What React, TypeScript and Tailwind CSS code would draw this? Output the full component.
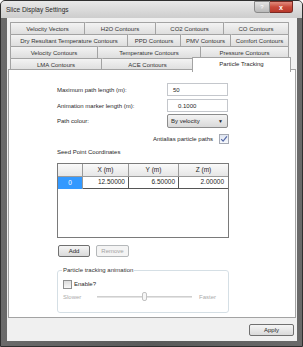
import React from "react";

type Tab = { label: string; w: number; selected?: boolean };

const rows: Tab[][] = [
  [
    { label: "Velocity Vectors", w: 75 },
    { label: "H2O Contours", w: 71 },
    { label: "CO2 Contours", w: 68 },
    { label: "CO  Contours", w: 65 },
  ],
  [
    { label: "Dry Resultant Temperature Contours", w: 118 },
    { label: "PPD Contours", w: 53 },
    { label: "PMV Contours", w: 50 },
    { label: "Comfort Contours", w: 58 },
  ],
  [
    { label: "Velocity Contours", w: 88 },
    { label: "Temperature Contours", w: 103 },
    { label: "Pressure Contours", w: 88 },
  ],
  [
    { label: "LMA Contours", w: 92 },
    { label: "ACE Contours", w: 92 },
    { label: "Particle Tracking", w: 95, selected: true },
  ],
];

function Check() {
  return (
    <svg width="8" height="8" viewBox="0 0 8 8">
      <path d="M1.2 4.2 L3.1 6.2 L6.9 1.4" fill="none" stroke="#5468a6" strokeWidth="1.2" />
    </svg>
  );
}

export default function App() {
  return (
    <div className="w-[303px] h-[347px] flex flex-col bg-[#5d5d5d] border border-[#2f2f2f] rounded-t-[5px] overflow-hidden font-['Liberation_Sans',Arial,sans-serif] text-[6px] leading-none text-[#1f1f1f]">
      {/* Title bar */}
      <div className="h-[17px] shrink-0 flex items-start justify-between pl-[5px] pr-[9px] bg-gradient-to-b from-[#e9e9e9] to-[#cdcdcd]">
        <span className="mt-[6px] text-[6.5px] text-[#2a2a2a]">Slice Display Settings</span>
        <div className="flex">
          <div className="w-[16px] h-[12px] flex items-center justify-center border border-[#8a8a8a] rounded-bl-[3px] bg-gradient-to-b from-[#e2e2e2] to-[#b9b9b9] text-[6px] text-white">
            ?
          </div>
          <div className="w-[23px] h-[12px] flex items-center justify-center border border-l-0 border-[#7a2a23] rounded-br-[3px] bg-gradient-to-b from-[#e08a7d] via-[#c94a3b] to-[#b9392b] text-[7px] font-bold text-white">
            x
          </div>
        </div>
      </div>

      {/* Frame + client */}
      <div className="flex-1 flex pl-[6px] pr-[5px] pb-[5px] bg-gradient-to-r from-[#6a6a6a] via-[#5a5a5a] to-[#6a6a6a]">
        <div className="flex-1 flex flex-col bg-[#f0f0f0] pt-[4px]">
          {/* Tab rows */}
          <div className="flex flex-col pl-[3px]">
            {rows.map((row, ri) => (
              <div key={ri} className="flex h-[12px] items-end">
                {row.map((t) =>
                  t.selected ? (
                    <div
                      key={t.label}
                      style={{ width: t.w + 4 }}
                      className="relative z-10 -mx-[2px] h-[15px] -mb-[2px] flex items-start justify-center pt-[3px] bg-white border border-b-0 border-[#a3a3a3] rounded-t-[1px]"
                    >
                      {t.label}
                    </div>
                  ) : (
                    <div
                      key={t.label}
                      style={{ width: t.w }}
                      className="h-[12px] flex items-center justify-center bg-gradient-to-b from-[#f3f3f3] to-[#dedede] border border-l-0 first:border-l border-b-0 border-[#a3a3a3] rounded-t-[1px] text-[#333]"
                    >
                      {t.label}
                    </div>
                  )
                )}
              </div>
            ))}
          </div>

          {/* Panel */}
          <div className="mx-[1px] -mt-[1px] h-[249px] bg-white border border-[#a3a3a3] pl-[48px] pt-[13px] flex flex-col">
            <div className="flex items-center h-[13px]">
              <span className="w-[110px]">Maximum path length (m):</span>
              <div className="w-[61px] h-[13px] border border-[#c4c7cc] flex items-center pl-[5px]">50</div>
            </div>
            <div className="flex items-center h-[13px] mt-[3px]">
              <span className="w-[110px]">Animation marker length (m):</span>
              <div className="w-[61px] h-[13px] border border-[#c4c7cc] flex items-center pl-[10px]">0.1000</div>
            </div>
            <div className="flex items-center h-[14px] mt-[2px]">
              <span className="w-[110px]">Path colour:</span>
              <div className="w-[61px] h-[14px] border border-[#8c8c8c] rounded-[2px] bg-gradient-to-b from-[#f4f4f4] to-[#d9d9d9] flex items-center justify-between pl-[3px] pr-[4px]">
                <span>By velocity</span>
                <span className="text-[5px]">▼</span>
              </div>
            </div>
            <div className="flex items-center justify-end w-[172px] h-[10px] mt-[6px]">
              <span className="mr-[6px]">Antialias particle paths</span>
              <div className="w-[10px] h-[10px] border border-[#a5a9b3] bg-gradient-to-b from-[#dfe5f0] to-[#f7f9fc] flex items-center justify-center">
                <Check />
              </div>
            </div>

            <div className="mt-[5px] h-[8px]">Seed Point Coordinates</div>

            {/* Table */}
            <div className="mt-[6px] w-[172px] h-[75px] border border-[#7a7a7a] bg-white flex flex-col">
              <div className="flex h-[13px] bg-gradient-to-b from-[#fafafa] to-[#e6e6e6] border-b border-[#9a9a9a]">
                <div className="w-[25px] border-r border-[#9a9a9a]" />
                <div className="w-[46px] border-r border-[#9a9a9a] flex items-center justify-center text-[6.5px]">X (m)</div>
                <div className="w-[50px] border-r border-[#9a9a9a] flex items-center justify-center text-[6.5px]">Y (m)</div>
                <div className="flex-1 flex items-center justify-center text-[6.5px]">Z (m)</div>
              </div>
              <div className="flex h-[12px]">
                <div className="w-[25px] bg-[#3399ff] text-white flex items-center justify-center text-[6.5px] border-r border-[#9a9a9a]">0</div>
                <div className="w-[46px] border-r border-b border-[#555] flex items-center justify-end pr-[3px] text-[6.5px]">12.50000</div>
                <div className="w-[50px] border-r border-b border-[#555] flex items-center justify-end pr-[3px] text-[6.5px]">6.50000</div>
                <div className="flex-1 border-b border-[#555] flex items-center justify-end pr-[4px] text-[6.5px]">2.00000</div>
              </div>
            </div>

            {/* Buttons */}
            <div className="flex gap-[6px] mt-[7px] ml-[1px]">
              <div className="w-[32px] h-[12px] border border-[#707070] rounded-[2px] bg-gradient-to-b from-[#f5f5f5] to-[#dadada] flex items-center justify-center">
                Add
              </div>
              <div className="w-[33px] h-[12px] border border-[#b5b8ba] rounded-[2px] bg-[#f4f4f4] flex items-center justify-center text-[#a3a3a3]">
                Remove
              </div>
            </div>

            {/* Group box */}
            <fieldset className="mt-[10px] w-[172px] h-[46px] border border-[#d5dfe5] rounded-[3px] px-[5px]">
              <legend className="ml-[-1px] px-[1px] text-[#333]">Particle tracking animation</legend>
              <div className="flex items-center mt-[6px] h-[10px]">
                <div className="w-[9px] h-[9px] border border-[#8e8f8f] bg-gradient-to-b from-[#dcdcdc] to-[#f8f8f8]" />
                <span className="ml-[2px]">Enable?</span>
              </div>
              <div className="flex items-center mt-[3px] h-[10px] text-[#ababab]">
                <span className="w-[34px]">Slower</span>
                <div className="relative w-[95px] h-[2px] bg-[#e3e3e3] border-t border-[#cfcfcf]">
                  <div className="absolute left-[45px] -top-[5px] w-[5px] h-[9px] rounded-[2px] border border-[#c2c2c2] bg-[#f6f6f6]" />
                </div>
                <span className="ml-[7px]">Faster</span>
              </div>
            </fieldset>
          </div>

          {/* Footer */}
          <div className="flex-1 flex justify-end items-start pt-[6px] pr-[3px]">
            <div className="w-[45px] h-[12px] border border-[#707070] rounded-[2px] bg-gradient-to-b from-[#f5f5f5] to-[#dadada] flex items-center justify-center">
              Apply
            </div>
          </div>
        </div>
      </div>
    </div>
  );
}
